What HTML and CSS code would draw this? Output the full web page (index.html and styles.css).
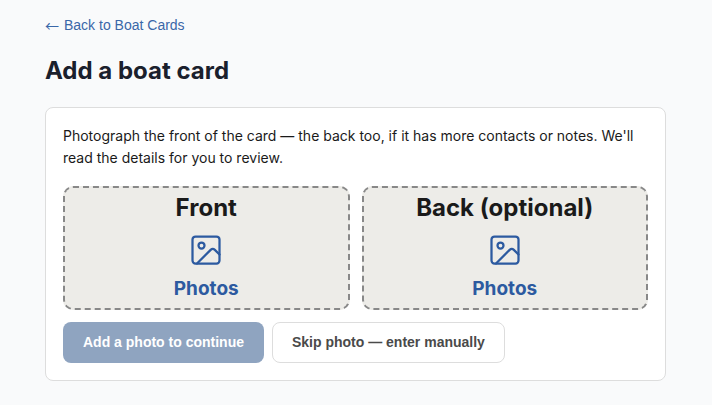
FILE: index.html
```html
<!DOCTYPE html>
<html lang="en">
<head>
  <meta charset="UTF-8" />
  <meta name="viewport" content="width=device-width, initial-scale=1" />
  <title>Add a boat card</title>
  <link rel="stylesheet" href="styles.css">
</head>
<body>

  <main class="page">
    <a class="back-link" href="#"><span class="arrow">←</span> Back to Boat Cards</a>
    <h1>Add a boat card</h1>

    <section class="card">
      <p class="intro">Photograph the front of the card — the back too, if it has more contacts or notes. We'll read the details for you to review.</p>

      <div class="photo-slots">
        <div class="slot">
          <h2>Front</h2>
          <button class="pick" type="button">
            <svg class="icon" viewBox="0 0 24 24" aria-hidden="true">
              <rect x="3" y="3" width="18" height="18" rx="2" />
              <circle cx="9" cy="9" r="2" />
              <path d="M21 15l-3.1-3.1a2 2 0 0 0-2.8 0L6 21" />
            </svg>
            Photos
          </button>
        </div>
        <div class="slot">
          <h2>Back (optional)</h2>
          <button class="pick" type="button">
            <svg class="icon" viewBox="0 0 24 24" aria-hidden="true">
              <rect x="3" y="3" width="18" height="18" rx="2" />
              <circle cx="9" cy="9" r="2" />
              <path d="M21 15l-3.1-3.1a2 2 0 0 0-2.8 0L6 21" />
            </svg>
            Photos
          </button>
        </div>
      </div>

      <div class="actions">
        <button class="btn primary" type="button" disabled>Add a photo to continue</button>
        <button class="btn secondary" type="button">Skip photo — enter manually</button>
      </div>
    </section>
  </main>

</body>
</html>
```
FILE: styles.css
```css
* {
  box-sizing: border-box;
}

body {
  margin: 0;
  background-color: #f9fafb;
  color: #1a1a1a;
  font-family: Inter, sans-serif;
  font-size: 14px;
  line-height: 22px;
}

.page {
  max-width: 720px;
  margin: 0 auto;
  padding: 14px 46px 24px 45px;
}

.back-link {
  display: flex;
  gap: 5px;
  color: #3a67a8;
  font-family: "Liberation Sans", Arial, sans-serif;
  text-decoration: none;
}

.arrow {
  font-family: "Noto Sans CJK JP", sans-serif;
}

h1 {
  margin: 19px 0 20px;
  color: #1a202c;
  font-size: 24px;
  line-height: 32px;
  font-weight: 700;
}

.card {
  background: white;
  border: 1px solid #dddddd;
  border-radius: 8px;
  padding: 17px;
}

.intro {
  margin: 0 0 17px;
}

.photo-slots {
  display: grid;
  grid-template-columns: 1fr 1fr;
  gap: 12px;
}

.slot {
  display: flex;
  flex-direction: column;
  align-items: center;
  gap: 8px;
  background-color: #edece8;
  border: 2px dashed #888888;
  border-radius: 10px;
  padding: 4px 8px 6px;
}

.slot h2 {
  margin: 0;
  font-size: 24px;
  line-height: 32px;
  font-weight: 700;
}

.pick {
  display: flex;
  flex-direction: column;
  align-items: center;
  gap: 8px;
  border: none;
  background: none;
  padding: 0;
  color: #2c5aa0;
  font-family: inherit;
  font-size: 19px;
  line-height: 26px;
  font-weight: 700;
  cursor: pointer;
}

.icon {
  width: 36px;
  height: 36px;
  fill: none;
  stroke: currentColor;
  stroke-width: 1.5;
  stroke-linecap: round;
  stroke-linejoin: round;
}

.actions {
  display: flex;
  flex-wrap: wrap;
  gap: 8px;
  margin-top: 12px;
}

.btn {
  padding: 9px 19px;
  border: 1px solid transparent;
  border-radius: 8px;
  font-family: "Liberation Sans", Arial, sans-serif;
  font-size: 14px;
  line-height: 21px;
  font-weight: 700;
  cursor: pointer;
}

.primary {
  background-color: #8fa4c0;
  color: white;
}

.primary:disabled {
  cursor: not-allowed;
}

.secondary {
  background-color: white;
  border-color: #dddddd;
  color: #4a4a4a;
}
```
